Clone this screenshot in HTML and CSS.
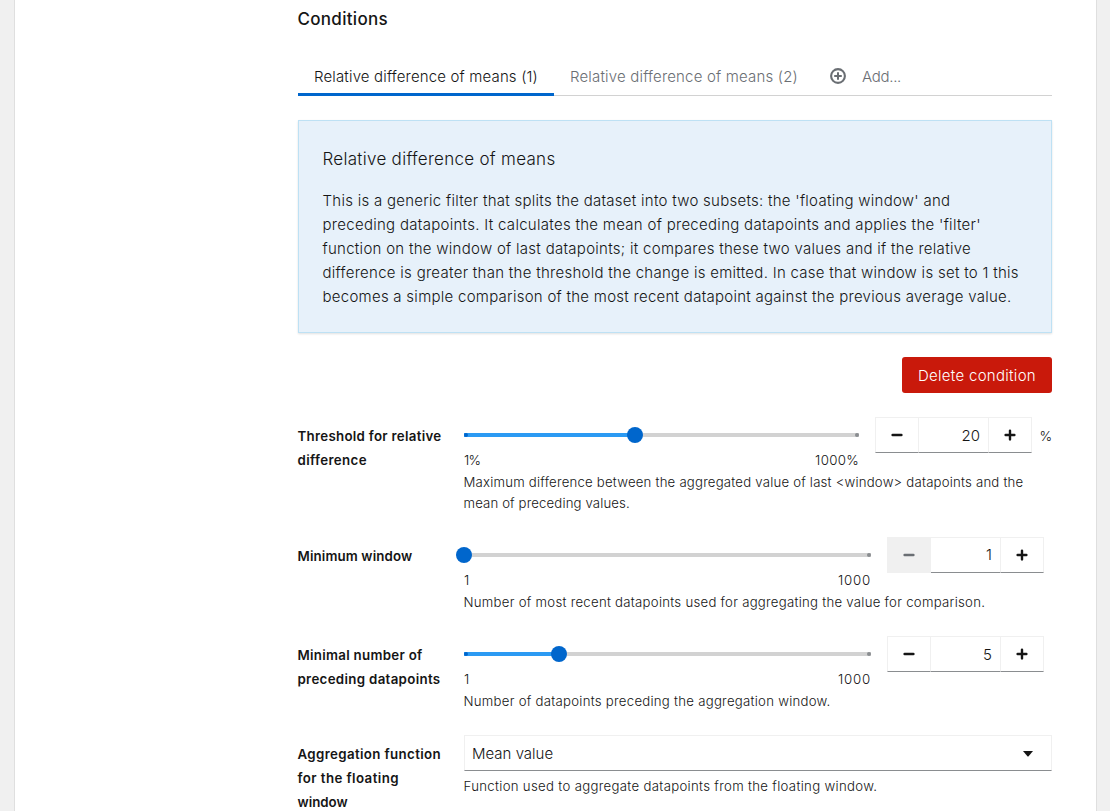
FILE: index.html
```html
<!DOCTYPE html>
<html lang="en">
<head>
<meta charset="utf-8">
<title>Conditions</title>
<link rel="stylesheet" href="styles.css">
</head>
<body>
<main class="card">
<section class="content">
  <h2 class="title">Conditions</h2>
  <nav class="tabs">
    <a class="tab tab-active">Relative difference of means (1)</a>
    <a class="tab tab-second">Relative difference of means (2)</a>
    <a class="tab tab-add">
      <svg class="add-icon" viewBox="0 0 16 16"><circle cx="8" cy="8" r="6.9" fill="none" stroke="currentColor" stroke-width="2.1"/><path d="M8 4.2v7.6M4.2 8h7.6" stroke="currentColor" stroke-width="2"/></svg>
      <span>Add...</span>
    </a>
  </nav>
  <article class="info">
    <h3 class="info-title">Relative difference of means</h3>
    <p class="info-text">
      <span class="wide-1">This is a generic filter that splits the dataset into two subsets: the 'floating window' and</span><br>
      <span class="wide-3">preceding datapoints. It calculates the mean of preceding datapoints and applies the 'filter'</span><br>
      <span class="wide-2">function on the window of last datapoints; it compares these two values and if the relative</span><br>
      <span class="wide-2">difference is greater than the threshold the change is emitted. In case that window is set to 1 this</span><br>
      <span class="wide-1">becomes a simple comparison of the most recent datapoint against the previous average value.</span>
    </p>
  </article>
  <div class="actions"><button class="delete">Delete condition</button></div>

  <div class="row">
    <label class="label"><span class="wide-3">Threshold for relative</span><br><span class="wide-5">difference</span></label>
    <div class="field">
      <div class="slider">
        <div class="range">
          <div class="rail"><i class="fill" style="width:43.2%"></i><i class="dot dot-start"></i><i class="dot dot-end"></i><i class="thumb" style="left:43.2%"></i></div>
          <div class="limits"><span class="percent">1%</span><span class="wide-4">1000%</span></div>
        </div>
        <div class="stepper">
          <button class="step minus"><svg class="sign" viewBox="0 0 12 12"><path d="M1.6 6h8.8"/></svg></button>
          <div class="value">20</div>
          <button class="step plus"><svg class="sign" viewBox="0 0 12 12"><path d="M1.6 6h8.8M6 1.6v8.8"/></svg></button>
        </div>
        <span class="unit">%</span>
      </div>
      <p class="help"><span class="wide-0">Maximum difference between the aggregated value of last &lt;window&gt; datapoints and the</span><br><span class="wide-half">mean of preceding values.</span></p>
    </div>
  </div>

  <div class="row">
    <label class="label"><span class="wide-half">Minimum window</span></label>
    <div class="field">
      <div class="slider">
        <div class="range">
          <div class="rail"><i class="dot dot-end"></i><i class="thumb" style="left:0%"></i></div>
          <div class="limits"><span>1</span><span class="thousand">1000</span></div>
        </div>
        <div class="stepper">
          <button class="step minus disabled"><svg class="sign" viewBox="0 0 12 12"><path d="M1.6 6h8.8"/></svg></button>
          <div class="value value-low">1</div>
          <button class="step plus"><svg class="sign" viewBox="0 0 12 12"><path d="M1.6 6h8.8M6 1.6v8.8"/></svg></button>
        </div>
        <span class="unit"></span>
      </div>
      <p class="help"><span class="wide-1">Number of most recent datapoints used for aggregating the value for comparison.</span></p>
    </div>
  </div>

  <div class="row">
    <label class="label"><span class="wide-3">Minimal number of</span><br><span class="wide-4">preceding datapoints</span></label>
    <div class="field">
      <div class="slider">
        <div class="range">
          <div class="rail"><i class="fill" style="width:23.4%"></i><i class="dot dot-start"></i><i class="dot dot-end"></i><i class="thumb" style="left:23.4%"></i></div>
          <div class="limits"><span>1</span><span class="thousand">1000</span></div>
        </div>
        <div class="stepper">
          <button class="step minus"><svg class="sign" viewBox="0 0 12 12"><path d="M1.6 6h8.8"/></svg></button>
          <div class="value">5</div>
          <button class="step plus"><svg class="sign" viewBox="0 0 12 12"><path d="M1.6 6h8.8M6 1.6v8.8"/></svg></button>
        </div>
        <span class="unit"></span>
      </div>
      <p class="help"><span class="wide-1">Number of datapoints preceding the aggregation window.</span></p>
    </div>
  </div>

  <div class="row">
    <label class="label"><span class="wide-5">Aggregation function</span><br><span class="wide-6">for the floating</span><br>window</label>
    <div class="field">
      <div class="select"><span>Mean value</span><svg class="caret" viewBox="0 0 10 6"><path d="M0 0h10L5.6 5.2q-.6.6-1.2 0z"/></svg></div>
      <p class="help"><span class="wide-4">Function used to aggregate datapoints from the floating window.</span></p>
    </div>
  </div>
</section>
</main>
</body>
</html>
```
FILE: styles.css
```css
* { box-sizing: border-box; }
body { margin: 0; padding: 0 14px; height: 811px; overflow: hidden; background: #f0f0f0; color: #151515; font: 350 15px/24px Inter, sans-serif; }
h2, h3, p { margin: 0; font-weight: inherit; }
button { font: inherit; margin: 0; padding: 0; }
.card { width: 1083px; height: 811px; border: solid #dfdfdf; border-width: 0 1px; background: #fff; padding-left: 282.5px; }
.content { width: 754.5px; padding-top: 6px; white-space: nowrap; }
.title { font-size: 17px; font-weight: 500; line-height: 27px; letter-spacing: .302px; }
.tabs { display: flex; height: 39px; margin: 24px 0 24px .5px; box-shadow: inset 0 -1px #d2d2d2; color: #6a6e73; }
.tab { padding: 8px 16px 0; line-height: 24px; }
.tab-active { width: 256px; color: #151515; border-bottom: 3px solid #06c; letter-spacing: .155px; }
.tab-second { width: 260px; letter-spacing: .177px; }
.tab-add { display: flex; gap: 16px; letter-spacing: -.299px; }
.add-icon { width: 16px; height: 16px; margin-top: 4px; margin-top: 3px; }
.info { height: 213px; margin-left: .5px; border: 1px solid #bee1f4; background: #e7f1fa; padding: 25px 23.5px 0; box-shadow: 0 1px 2px rgba(3,3,3,.12); }
.info-title { font-size: 17px; line-height: 27px; margin-bottom: 16px; letter-spacing: .289px; }
.actions { display: flex; justify-content: flex-end; margin: 24px 0; }
.delete { width: 150px; height: 36px; padding-top: 2px; border: 0; border-radius: 3px; background: #c9190b; color: #fff; letter-spacing: .294px; }
.row { display: grid; grid-template-columns: 166px 588.5px; margin-bottom: 23px; }
.label { padding-top: 7px; font-size: 13.3px; font-weight: 600; }
.slider { display: flex; height: 55px; padding-left: .5px; }
.range { flex: 1; padding-top: 16px; }
.rail { position: relative; height: 4px; background: #d2d2d2; }
.fill { display: block; height: 4px; background: #2b9af3; }
.dot { position: absolute; top: 0; width: 4px; height: 4px; border-radius: 50%; background: #8a8d90; }
.dot-start { left: 0; background: #06c; }
.dot-end { right: 0; }
.thumb { position: absolute; top: -6px; width: 16px; height: 16px; margin-left: -8px; border-radius: 50%; background: #06c; }
.limits { display: flex; justify-content: space-between; font-size: 13.3px; line-height: 21px; padding-top: 13px; }
.percent { letter-spacing: -.8px; }
.thousand { letter-spacing: .777px; }
.stepper { display: flex; width: 157px; height: 36px; margin-left: 16px; }
.step { width: 44px; border: 1px solid #f0f0f0; border-bottom-color: #8a8d90; background: #fff; color: #151515; display: grid; place-items: center; }
.plus { width: 43px; border-left: 0; }
.value { width: 70px; border: solid #f0f0f0; border-width: 1px 1px 1px 0; border-bottom-color: #8a8d90; padding: 6px 8px 0 0; text-align: right; }
.value-low { padding-top: 5px; }
.sign { width: 12px; height: 12px; fill: none; stroke: currentColor; stroke-width: 2.4; stroke-linecap: round; }
.disabled { background: #f0f0f0; border-color: #f0f0f0; color: #6a6e73; }
.unit { margin-left: 8px; line-height: 38px; font-size: 13.5px; }
.unit:not(:empty) { width: 12px; margin-left: 7.5px; margin-right: .5px; }
.help { font-size: 13.2px; line-height: 21px; }
.select { display: flex; justify-content: space-between; align-items: center; height: 36px; margin-left: .5px; padding: 1px 18px 0 7px; border: 1px solid #f0f0f0; border-bottom-color: #8a8d90; }
.caret { width: 10px; height: 6px; fill: #151515; }
.select + .help { padding-top: 5px; }

.wide-half { letter-spacing: .13px; }
.wide-0 { letter-spacing: .207px; }
.wide-1 { letter-spacing: .266px; }
.wide-2 { letter-spacing: .282px; }
.wide-3 { letter-spacing: .289px; }
.wide-4 { letter-spacing: .318px; }
.wide-5 { letter-spacing: .365px; }
.wide-6 { letter-spacing: .418px; }
```
